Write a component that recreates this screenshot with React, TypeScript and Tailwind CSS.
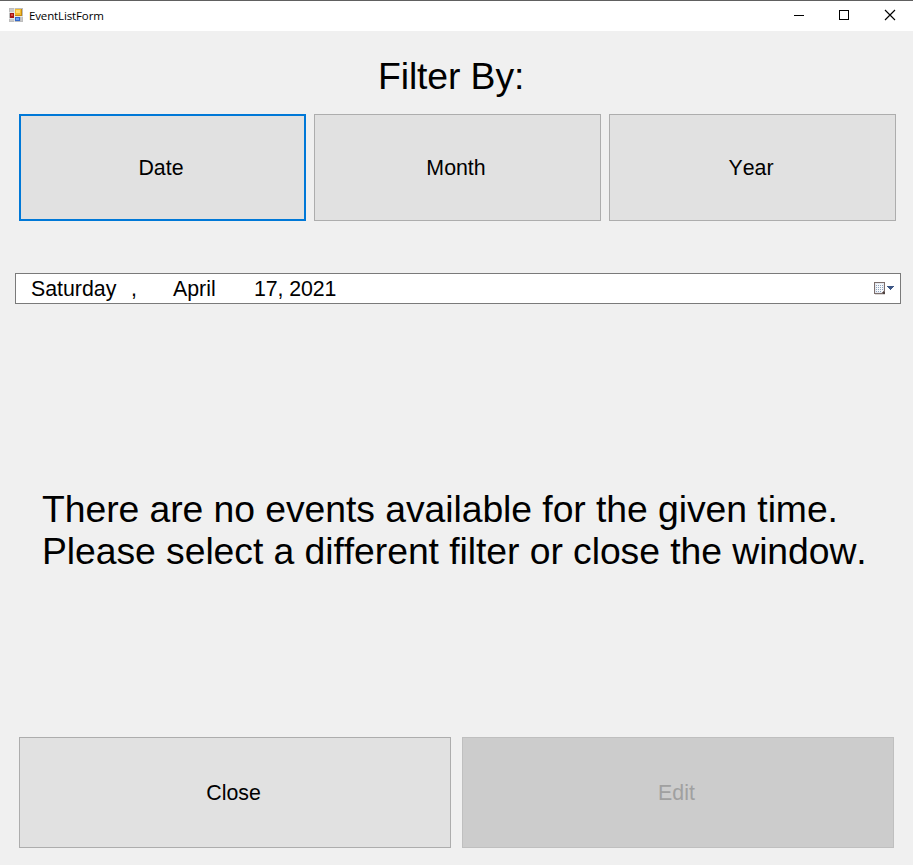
import type { ReactNode } from "react";

function AppIcon() {
  return (
    <svg className="mb-[2px]" width="14" height="14" viewBox="0 0 14 14" shapeRendering="crispEdges">
      <rect width="14" height="14" fill="#bdbdbd" />
      <path d="M1 1h4v3H1zM1 11h4v2H1zM12 9h1v4h-1z" fill="#c9c9c9" />
      <path d="M5 0h1v14H5zM0 4h5v1H0zM0 10h5v1H0zM6 8h8v1H6z" fill="#e6e6e6" />
      <rect x="6" y="1" width="7" height="7" fill="#c58a12" />
      <rect x="6" y="1" width="6" height="6" fill="#f2bb2c" />
      <rect x="7" y="2" width="4" height="3" fill="#ffdb72" />
      <rect x="1" y="5" width="4" height="5" fill="#a51515" />
      <rect x="2" y="6" width="2" height="2" fill="#dc4a3c" />
      <rect x="6" y="9" width="5" height="4" fill="#3468c8" />
      <rect x="7" y="10" width="3" height="2" fill="#6f9ff0" />
    </svg>
  );
}

function CalendarIcon() {
  return (
    <svg className="block" width="21" height="14" viewBox="0 0 21 14" shapeRendering="crispEdges">
      <rect x="1" y="12" width="10" height="1" fill="#dddad8" />
      <rect width="11" height="12" fill="#7b6d6b" />
      <rect x="1" y="1" width="9" height="10" fill="#e4e8ef" />
      <rect x="2" y="2" width="7" height="8" fill="#f6f8fb" />
      <path
        d="M2 3h1v1H2zM4 3h1v1H4zM6 3h1v1H6zM8 3h1v1H8zM2 5h1v1H2zM4 5h1v1H4zM6 5h1v1H6zM8 5h1v1H8zM2 7h1v1H2zM4 7h1v1H4zM6 7h1v1H6zM8 7h1v1H8zM2 9h1v1H2zM4 9h1v1H4zM6 9h1v1H6z"
        fill="#8fa3bd"
      />
      <path d="M9 9h1v1H9zM8 10h1v1H8z" fill="#7b6d6b" />
      <path d="M9 10h2v2H9z" fill="#4f4341" />
      <path d="M13 4h7v1h-7zM14 5h5v1h-5zM15 6h3v1h-3zM16 7h1v1h-1z" fill="#3d5685" />
    </svg>
  );
}

type FormButtonProps = { children: ReactNode; className: string };

function FormButton({ children, className }: FormButtonProps) {
  return (
    <button className={`flex items-center justify-center pr-[3px] text-[21.33px] leading-6 ${className}`}>
      {children}
    </button>
  );
}

export default function App() {
  return (
    <div className="flex h-[865px] w-[913px] flex-col overflow-hidden bg-[#f0f0f0] font-['Liberation_Sans',Arial,sans-serif] text-black [font-kerning:none]">
      <header className="flex h-[31px] shrink-0 items-center border-t border-[#606060] bg-white pl-[9px]">
        <AppIcon />
        <span className="ml-[6px] font-['Open_Sans',sans-serif] text-[11.5px] leading-4 tracking-[-0.13px]">
          EventListForm
        </span>
        <svg className="ml-auto" width="137" height="30" viewBox="0 0 137 30" fill="none" stroke="#000">
          <path d="M18 14.5h10M63.5 9.5h9v9h-9z" shapeRendering="crispEdges" />
          <path d="M109 9l10 10M119 9l-10 10" strokeWidth="1.15" />
        </svg>
      </header>

      <main className="flex grow flex-col">
        <h1 className="mt-[24px] pl-[378px] text-[37.33px] leading-[42px] tracking-[-0.1px]">Filter By:</h1>

        <div className="mt-[17px] ml-[19px] flex h-[107px] gap-2">
          <FormButton className="w-[287px] border-2 border-[#0078d7] bg-[#e1e1e1]">Date</FormButton>
          <FormButton className="w-[287px] border border-[#adadad] bg-[#e1e1e1]">Month</FormButton>
          <FormButton className="w-[287px] border border-[#adadad] bg-[#e1e1e1]">Year</FormButton>
        </div>

        <div className="mt-[52px] ml-[15px] flex h-[31px] w-[886px] items-center border border-[#7a7a7a] bg-white pr-[5px] pl-[15px] text-[21.33px] leading-6">
          <span className="w-[100px]">Saturday</span>
          <span className="w-[42px]">,</span>
          <span className="w-[81px]">April</span>
          <span className="tracking-[-0.1px]">17, 2021</span>
          <span className="ml-auto">
            <CalendarIcon />
          </span>
        </div>

        <p className="mt-[184px] pl-[42px] text-[37.33px] leading-[42px] tracking-[-0.06px] whitespace-nowrap">
          There are no events available for the given time.
          <br />
          Please select a different filter or close the window.
        </p>

        <div className="mt-auto mb-[17px] ml-[19px] flex h-[111px] gap-[11px]">
          <FormButton className="w-[432px] border border-[#adadad] bg-[#e1e1e1]">Close</FormButton>
          <FormButton className="w-[432px] border border-[#bfbfbf] bg-[#cccccc] text-[#a0a0a0]">Edit</FormButton>
        </div>
      </main>
    </div>
  );
}
